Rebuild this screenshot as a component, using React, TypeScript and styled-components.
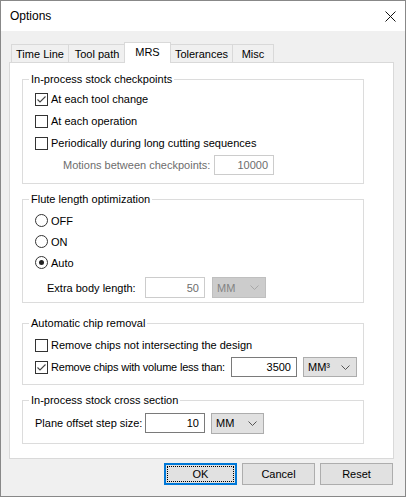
import React from "react";
import styled, { createGlobalStyle, css } from "styled-components";

const GlobalStyle = createGlobalStyle`
  html, body { margin: 0; padding: 0; background: #ffffff; }
  body {
    font-family: "Liberation Sans", Arial, sans-serif;
    font-size: 11px;
    color: #000;
  }
  * { box-sizing: border-box; }
`;

const Window = styled.div`
  width: 406px;
  height: 497px;
  border: 1px solid #888888;
  background: #f0f0f0;
  display: flex;
  flex-direction: column;
`;

const TitleBar = styled.div`
  height: 30px;
  flex: none;
  background: #ffffff;
  display: flex;
  align-items: center;
  justify-content: space-between;
  padding: 0 9px 0 9px;
  font-size: 12px;
`;

const CloseButton = styled.div`
  width: 12px;
  height: 12px;
  display: flex;
  align-items: center;
  justify-content: center;
`;

const Body = styled.div`
  flex: 1;
  display: flex;
  flex-direction: column;
  padding: 11px 11px 11px 8px;
`;

const TabStrip = styled.div`
  height: 20px;
  display: flex;
  align-items: flex-end;
  padding-left: 2px;
`;

const Tab = styled.div<{ $w: number; $active?: boolean }>`
  width: ${(p) => p.$w}px;
  height: 18px;
  margin-left: -1px;
  border: 1px solid #d9d9d9;
  border-bottom: none;
  background: #f0f0f0;
  display: flex;
  align-items: center;
  justify-content: center;
  padding-top: 1px;
  white-space: nowrap;
  &:first-child { margin-left: 0; }
  ${(p) =>
    p.$active &&
    css`
      height: 21px;
      margin-left: -2px;
      margin-bottom: -1px;
      background: #ffffff;
      position: relative;
      z-index: 1;
      padding-top: 0;
      padding-bottom: 2px;
    `}
`;

const Panel = styled.div`
  height: 397px;
  flex: none;
  border: 1px solid #d9d9d9;
  background: #ffffff;
  padding: 9px 0 0 12px;
`;

const Group = styled.fieldset<{ $mt?: number }>`
  width: 342px;
  min-width: 0;
  margin: ${(p) => p.$mt ?? 0}px 0 0 0;
  padding: 0;
  border: 1px solid #dcdcdc;
`;

const Legend = styled.legend`
  margin-left: 6px;
  padding: 0 2px;
  line-height: 14px;
  font-size: 11px;
`;

const GroupBody = styled.div<{ $pt: number; $pb: number }>`
  padding: ${(p) => p.$pt}px 12px ${(p) => p.$pb}px 12px;
`;

const Row = styled.div<{ $h?: number; $ml?: number; $mt?: number }>`
  height: ${(p) => p.$h ?? 22}px;
  margin-left: ${(p) => p.$ml ?? 0}px;
  margin-top: ${(p) => p.$mt ?? 0}px;
  display: flex;
  align-items: center;
  white-space: nowrap;
`;

const Box = styled.span`
  width: 13px;
  height: 13px;
  flex: none;
  border: 1px solid #333333;
  background: #ffffff;
  margin-right: 3px;
  display: flex;
  align-items: center;
  justify-content: center;
`;

const RadioCircle = styled.span`
  width: 13px;
  height: 13px;
  flex: none;
  border: 1px solid #333333;
  border-radius: 50%;
  background: #ffffff;
  margin-right: 3px;
  display: flex;
  align-items: center;
  justify-content: center;
`;

const RadioDot = styled.span`
  width: 5px;
  height: 5px;
  border-radius: 50%;
  background: #222222;
`;

const FieldLabel = styled.span<{ $w?: number; $disabled?: boolean; $tight?: boolean }>`
  width: ${(p) => (p.$w ? `${p.$w}px` : "auto")};
  flex: none;
  white-space: nowrap;
  letter-spacing: ${(p) => (p.$tight ? "-0.2px" : "normal")};
  color: ${(p) => (p.$disabled ? "#6d6d6d" : "#000000")};
`;

const TextBox = styled.div<{ $w: number; $h: number; $disabled?: boolean }>`
  width: ${(p) => p.$w}px;
  height: ${(p) => p.$h}px;
  flex: none;
  border: 1px solid ${(p) => (p.$disabled ? "#cccccc" : "#7a7a7a")};
  background: #ffffff;
  color: ${(p) => (p.$disabled ? "#6d6d6d" : "#000000")};
  display: flex;
  align-items: center;
  justify-content: flex-end;
  padding-right: 5px;
`;

const Dropdown = styled.div<{ $w: number; $h: number; $disabled?: boolean }>`
  width: ${(p) => p.$w}px;
  height: ${(p) => p.$h}px;
  flex: none;
  margin-left: ${(p) => (p.$disabled ? 7 : 6)}px;
  border: 1px solid ${(p) => (p.$disabled ? "#bfbfbf" : "#adadad")};
  background: ${(p) => (p.$disabled ? "#cccccc" : "#e1e1e1")};
  color: ${(p) => (p.$disabled ? "#838383" : "#000000")};
  display: flex;
  align-items: center;
  justify-content: space-between;
  padding: 0 6px 0 4px;
`;

const ButtonRow = styled.div`
  display: flex;
  justify-content: flex-end;
  gap: 5px;
  margin-top: 4px;
  padding-right: 1px;
`;

const Button = styled.div<{ $default?: boolean }>`
  width: 73px;
  height: 22px;
  background: #e1e1e1;
  border: 1px solid ${(p) => (p.$default ? "#0078d7" : "#adadad")};
  box-shadow: ${(p) => (p.$default ? "inset 0 0 0 1px #0078d7" : "none")};
  display: flex;
  padding: 2px;
`;

const Caption = styled.span<{ $focus?: boolean }>`
  flex: 1;
  display: flex;
  align-items: center;
  justify-content: center;
  border: 1px dotted ${(p) => (p.$focus ? "#000000" : "transparent")};
`;

const Check = ({ on }: { on?: boolean }) => (
  <Box>
    {on && (
      <svg width="11" height="11" viewBox="0 0 11 11">
        <polyline points="1.5,5.5 4,8 9.5,2.5" fill="none" stroke="#444" strokeWidth="1.1" />
      </svg>
    )}
  </Box>
);

const Radio = ({ on }: { on?: boolean }) => <RadioCircle>{on && <RadioDot />}</RadioCircle>;

const Chevron = ({ color }: { color: string }) => (
  <svg width="9" height="5" viewBox="0 0 9 5">
    <polyline points="0.5,0.5 4.5,4.5 8.5,0.5" fill="none" stroke={color} strokeWidth="1" />
  </svg>
);

export default function App() {
  return (
    <>
      <GlobalStyle />
      <Window>
        <TitleBar>
          <span>Options</span>
          <CloseButton>
            <svg width="11" height="11" viewBox="0 0 11 11">
              <line x1="0.5" y1="0.5" x2="10.5" y2="10.5" stroke="#111" strokeWidth="1" />
              <line x1="10.5" y1="0.5" x2="0.5" y2="10.5" stroke="#111" strokeWidth="1" />
            </svg>
          </CloseButton>
        </TitleBar>
        <Body>
          <TabStrip>
            <Tab $w={58}>Time Line</Tab>
            <Tab $w={58}>Tool path</Tab>
            <Tab $w={47} $active>MRS</Tab>
            <Tab $w={63}>Tolerances</Tab>
            <Tab $w={42}>Misc</Tab>
          </TabStrip>
          <Panel>
            <Group>
              <Legend>In-process stock checkpoints</Legend>
              <GroupBody $pt={2} $pb={8}>
                <Row>
                  <Check on />
                  At each tool change
                </Row>
                <Row>
                  <Check />
                  At each operation
                </Row>
                <Row>
                  <Check />
                  Periodically during long cutting sequences
                </Row>
                <Row $h={20} $mt={1} $ml={28}>
                  <FieldLabel $w={151} $disabled>
                    Motions between checkpoints:
                  </FieldLabel>
                  <TextBox $w={60} $h={20} $disabled>
                    10000
                  </TextBox>
                </Row>
              </GroupBody>
            </Group>

            <Group $mt={8}>
              <Legend>Flute length optimization</Legend>
              <GroupBody $pt={4} $pb={4}>
                <Row $h={21}>
                  <Radio />
                  OFF
                </Row>
                <Row $h={21}>
                  <Radio />
                  ON
                </Row>
                <Row $h={21}>
                  <Radio on />
                  Auto
                </Row>
                <Row $h={21} $mt={4} $ml={12}>
                  <FieldLabel $w={98}>Extra body length:</FieldLabel>
                  <TextBox $w={60} $h={21} $disabled>
                    50
                  </TextBox>
                  <Dropdown $w={54} $h={21} $disabled>
                    <span>MM</span>
                    <Chevron color="#a8a8a8" />
                  </Dropdown>
                </Row>
              </GroupBody>
            </Group>

            <Group $mt={13}>
              <Legend>Automatic chip removal</Legend>
              <GroupBody $pt={4} $pb={6}>
                <Row>
                  <Check />
                  Remove chips not intersecting the design
                </Row>
                <Row>
                  <Check on />
                  <FieldLabel $w={180} $tight>
                    Remove chips with volume less than:
                  </FieldLabel>
                  <TextBox $w={66} $h={20}>
                    3500
                  </TextBox>
                  <Dropdown $w={54} $h={20}>
                    <span>MM³</span>
                    <Chevron color="#555" />
                  </Dropdown>
                </Row>
              </GroupBody>
            </Group>

            <Group $mt={8}>
              <Legend>In-process stock cross section</Legend>
              <GroupBody $pt={5} $pb={9}>
                <Row>
                  <FieldLabel $w={110}>Plane offset step size:</FieldLabel>
                  <TextBox $w={60} $h={20}>
                    10
                  </TextBox>
                  <Dropdown $w={53} $h={21}>
                    <span>MM</span>
                    <Chevron color="#555" />
                  </Dropdown>
                </Row>
              </GroupBody>
            </Group>
          </Panel>
          <ButtonRow>
            <Button $default>
              <Caption $focus>OK</Caption>
            </Button>
            <Button>
              <Caption>Cancel</Caption>
            </Button>
            <Button>
              <Caption>Reset</Caption>
            </Button>
          </ButtonRow>
        </Body>
      </Window>
    </>
  );
}
